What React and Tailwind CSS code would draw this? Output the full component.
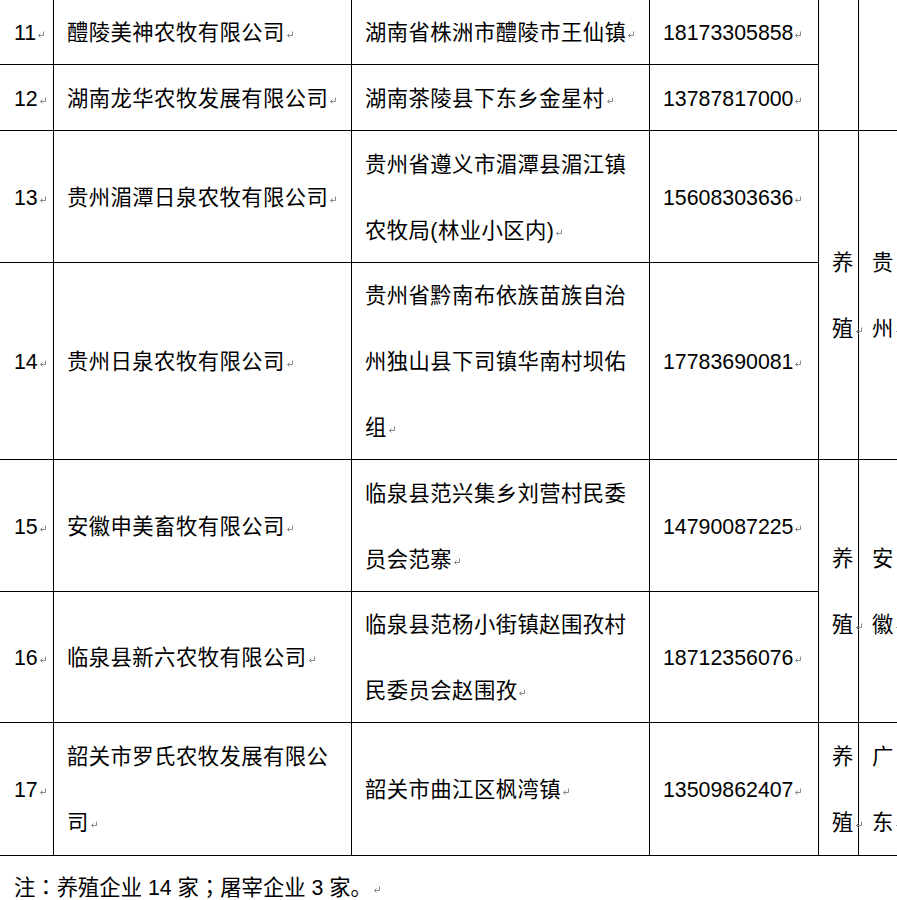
import React from "react";

function Mark() {
  return (
    <svg width="8" height="7" viewBox="0 0 8 7" className="inline-block align-[2px] ml-[1px]">
      <path d="M6.5 0.5 V4.5 H1.5" fill="none" stroke="#8a8a8a" strokeWidth="1" />
      <path d="M3.5 2.5 L1.5 4.5 L3.5 6.5" fill="none" stroke="#8a8a8a" strokeWidth="1" />
    </svg>
  );
}

function Cell({ lines = [], className = "", mark = true, cjk = false }) {
  return (
    <div className={"flex items-center border-b border-r border-black pl-[13px] whitespace-nowrap " + className}>
      <div className={"pt-[4px] " + (cjk ? "tracking-[0.45px]" : "")}>
        {lines.map((l, i) => (
          <div key={i}>
            {l}
            {mark && i === lines.length - 1 ? <Mark /> : null}
          </div>
        ))}
      </div>
    </div>
  );
}

export default function App() {
  return (
    <div className="w-[897px] overflow-hidden bg-white text-black font-['Liberation_Sans','Noto_Sans_CJK_SC',sans-serif] text-[21.33px] leading-[65.7px]">
      <div className="grid grid-cols-[54px_298px_298px_169px_40px_1fr] grid-rows-[65px_66px_132px_197px_132px_131px_133px]">
        {/* row 11 */}
        <Cell className="col-start-1 row-start-1 pl-[14px]" lines={["11"]} />
        <Cell cjk className="col-start-2 row-start-1" lines={["醴陵美神农牧有限公司"]} />
        <Cell cjk className="col-start-3 row-start-1" lines={["湖南省株洲市醴陵市王仙镇"]} />
        <Cell className="col-start-4 row-start-1" lines={["18173305858"]} />
        {/* row 12 */}
        <Cell className="col-start-1 row-start-2 pl-[14px]" lines={["12"]} />
        <Cell cjk className="col-start-2 row-start-2" lines={["湖南龙华农牧发展有限公司"]} />
        <Cell cjk className="col-start-3 row-start-2" lines={["湖南茶陵县下东乡金星村"]} />
        <Cell className="col-start-4 row-start-2" lines={["13787817000"]} />
        <Cell className="col-start-5 row-start-1 row-span-2" lines={[]} mark={false} />
        <Cell className="col-start-6 row-start-1 row-span-2 border-r-0" lines={[]} mark={false} />
        {/* row 13 */}
        <Cell className="col-start-1 row-start-3 pl-[14px]" lines={["13"]} />
        <Cell cjk className="col-start-2 row-start-3" lines={["贵州湄潭日泉农牧有限公司"]} />
        <Cell cjk className="col-start-3 row-start-3" lines={["贵州省遵义市湄潭县湄江镇", "农牧局(林业小区内)"]} />
        <Cell className="col-start-4 row-start-3" lines={["15608303636"]} />
        {/* row 14 */}
        <Cell className="col-start-1 row-start-4 pl-[14px]" lines={["14"]} />
        <Cell cjk className="col-start-2 row-start-4" lines={["贵州日泉农牧有限公司"]} />
        <Cell cjk className="col-start-3 row-start-4" lines={["贵州省黔南布依族苗族自治", "州独山县下司镇华南村坝佑", "组"]} />
        <Cell className="col-start-4 row-start-4" lines={["17783690081"]} />
        <Cell cjk className="col-start-5 row-start-3 row-span-2" lines={["养", "殖"]} />
        <Cell cjk className="col-start-6 row-start-3 row-span-2 border-r-0 pl-[12px]" lines={["贵", "州"]} />
        {/* row 15 */}
        <Cell className="col-start-1 row-start-5 pl-[14px]" lines={["15"]} />
        <Cell cjk className="col-start-2 row-start-5" lines={["安徽申美畜牧有限公司"]} />
        <Cell cjk className="col-start-3 row-start-5" lines={["临泉县范兴集乡刘营村民委", "员会范寨"]} />
        <Cell className="col-start-4 row-start-5" lines={["14790087225"]} />
        {/* row 16 */}
        <Cell className="col-start-1 row-start-6 pl-[14px]" lines={["16"]} />
        <Cell cjk className="col-start-2 row-start-6" lines={["临泉县新六农牧有限公司"]} />
        <Cell cjk className="col-start-3 row-start-6" lines={["临泉县范杨小街镇赵围孜村", "民委员会赵围孜"]} />
        <Cell className="col-start-4 row-start-6" lines={["18712356076"]} />
        <Cell cjk className="col-start-5 row-start-5 row-span-2" lines={["养", "殖"]} />
        <Cell cjk className="col-start-6 row-start-5 row-span-2 border-r-0 pl-[12px]" lines={["安", "徽"]} />
        {/* row 17 */}
        <Cell className="col-start-1 row-start-7 pl-[14px]" lines={["17"]} />
        <Cell cjk className="col-start-2 row-start-7" lines={["韶关市罗氏农牧发展有限公", "司"]} />
        <Cell cjk className="col-start-3 row-start-7" lines={["韶关市曲江区枫湾镇"]} />
        <Cell className="col-start-4 row-start-7" lines={["13509862407"]} />
        <Cell cjk className="col-start-5 row-start-7" lines={["养", "殖"]} />
        <Cell cjk className="col-start-6 row-start-7 border-r-0 pl-[12px]" lines={["广", "东"]} />
      </div>
      <div className="pl-[14px] pt-[21px] leading-[22px] whitespace-nowrap">
        注<span className="font-['Liberation_Sans','Noto_Sans_CJK_JP',sans-serif]">：</span>养殖企业 14 家<span className="font-['Liberation_Sans','Noto_Sans_CJK_JP',sans-serif]">；</span>屠宰企业 3 家。
        <Mark />
      </div>
    </div>
  );
}
